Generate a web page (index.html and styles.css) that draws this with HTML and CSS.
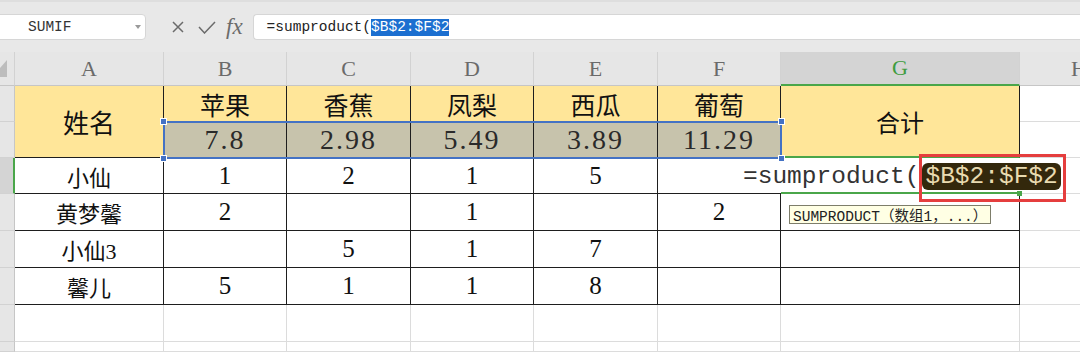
FILE: index.html
```html
<!DOCTYPE html>
<html lang="zh-CN">
<head>
    <meta charset="UTF-8">
    <title>SUMPRODUCT</title>
    <link rel="stylesheet" href="styles.css">
</head>
<body>
    <!-- Name box + formula bar -->
    <div class="toolbar">
        <div class="namebox">
            <span>SUMIF</span>
            <svg class="caret" width="6" height="4" viewBox="0 0 6 4"><path d="M0 0 L6 0 L3 4 Z" fill="#9a9a9a"/></svg>
        </div>
        <svg class="cancel" width="12" height="12" viewBox="0 0 12 12"><path d="M1 1 L11 11 M11 1 L1 11" stroke="#6b6b6b" stroke-width="1.5" fill="none"/></svg>
        <svg class="confirm" width="18" height="13" viewBox="0 0 18 13"><path d="M1 6 L6.5 12 L17 1" stroke="#6b6b6b" stroke-width="1.5" fill="none"/></svg>
        <span class="fx">fx</span>
        <div class="formula">=sumproduct(<span class="sel">$B$2:$F$2</span></div>
    </div>

    <!-- Sheet grid -->
    <div class="sheet">
        <!-- column headers -->
        <div class="ch corner">
            <svg width="8" height="18" viewBox="0 0 8 18"><path d="M0 8 L7 0 L7 17 L0 17 Z" fill="#bdbdbd"/></svg>
        </div>
        <div class="ch">A</div>
        <div class="ch">B</div>
        <div class="ch">C</div>
        <div class="ch">D</div>
        <div class="ch">E</div>
        <div class="ch">F</div>
        <div class="ch active">G</div>
        <div class="ch h">H</div>

        <!-- row 1 -->
        <div class="rh"></div>
        <div class="c t y merged head">姓名</div>
        <div class="c t y fruit">苹果</div>
        <div class="c t y fruit">香蕉</div>
        <div class="c t y fruit">凤梨</div>
        <div class="c t y fruit">西瓜</div>
        <div class="c t y fruit">葡萄</div>
        <div class="c t y merged total">合计</div>
        <div class="c"></div>

        <!-- row 2 -->
        <div class="rh"></div>
        <div class="c t price b2">7.8
            <span class="selbox">
                <i class="handle tl"></i><i class="handle tr"></i>
                <i class="handle bl"></i><i class="handle br"></i>
            </span>
        </div>
        <div class="c t price">2.98</div>
        <div class="c t price">5.49</div>
        <div class="c t price">3.89</div>
        <div class="c t price">11.29</div>
        <div class="c"></div>

        <!-- row 3 (being edited) -->
        <div class="rh active"></div>
        <div class="c t name">小仙</div>
        <div class="c t">1</div>
        <div class="c t">2</div>
        <div class="c t">1</div>
        <div class="c t">5</div>
        <div class="c t nb"></div>
        <div class="c t g3">
            <div class="edit">=sumproduct(<span class="ref">$B$2:$F$2</span></div>
            <div class="tip">SUMPRODUCT（数组1，...）</div>
        </div>
        <div class="c"></div>

        <!-- row 4 -->
        <div class="rh"></div>
        <div class="c t name">黄梦馨</div>
        <div class="c t">2</div>
        <div class="c t"></div>
        <div class="c t">1</div>
        <div class="c t"></div>
        <div class="c t">2</div>
        <div class="c t"></div>
        <div class="c"></div>

        <!-- row 5 -->
        <div class="rh"></div>
        <div class="c t name">小仙3</div>
        <div class="c t"></div>
        <div class="c t">5</div>
        <div class="c t">1</div>
        <div class="c t">7</div>
        <div class="c t"></div>
        <div class="c t"></div>
        <div class="c"></div>

        <!-- row 6 -->
        <div class="rh"></div>
        <div class="c t name">馨儿</div>
        <div class="c t">5</div>
        <div class="c t">1</div>
        <div class="c t">1</div>
        <div class="c t">8</div>
        <div class="c t"></div>
        <div class="c t"></div>
        <div class="c"></div>

        <!-- empty rows -->
        <div class="rh"></div>
        <div class="c"></div><div class="c"></div><div class="c"></div><div class="c"></div>
        <div class="c"></div><div class="c"></div><div class="c"></div><div class="c"></div>

        <div class="rh"></div>
        <div class="c"></div><div class="c"></div><div class="c"></div><div class="c"></div>
        <div class="c"></div><div class="c"></div><div class="c"></div><div class="c"></div>
    </div>
</body>
</html>
```

FILE: styles.css
```css
/* Reset */
*, *::before, *::after {
    margin: 0;
    padding: 0;
    box-sizing: border-box;
}

html, body {
    overflow: hidden;
}

body {
    width: 1080px;
    height: 352px;
    background-color: #e8e8e8;
    font-family: "Liberation Serif", "Noto Sans CJK SC", serif;
}

/* Formula bar */
.toolbar {
    height: 52px;
    display: flex;
    align-items: center;
    padding: 12px 0 12px;
    border-top: 2px solid #dedede;
}
.namebox {
    width: 152px;
    height: 26px;
    margin-left: -6px;
    padding-left: 33px;
    padding-right: 4px;
    display: flex;
    align-items: center;
    justify-content: space-between;
    background-color: #fff;
    border: 1px solid #d6d6d6;
    border-radius: 4px;
    font-family: "Liberation Mono", monospace;
    font-size: 14.5px;
    color: #333;
}
.cancel {
    margin-left: 26px;
}
.confirm {
    margin-left: 14px;
}
.fx {
    margin-left: 10px;
    font-family: "Liberation Serif", serif;
    font-style: italic;
    font-size: 23px;
    line-height: 26px;
    color: #6b6b6b;
}
.formula {
    flex: 1;
    height: 26px;
    margin-left: 10px;
    padding-left: 13px;
    display: flex;
    align-items: center;
    background-color: #fff;
    border: 1px solid #d6d6d6;
    border-right: none;
    border-radius: 4px 0 0 4px;
    font-family: "Liberation Mono", monospace;
    font-size: 14.5px;
    color: #222;
    white-space: nowrap;
}
.formula .sel {
    background-color: #1c6fd0;
    color: #fff;
    line-height: 17px;
}

/* Sheet */
.sheet {
    display: grid;
    grid-template-columns: 15px 149px 123px 124px 123px 124px 123px 239px 1fr;
    grid-template-rows: 34px 36px 36px 36px 37px 37px 37px 37px 10px;
    background-color: #fff;
}

.ch {
    display: flex;
    align-items: center;
    justify-content: center;
    background-color: #e6e6e6;
    border-right: 1px solid #d2d2d2;
    border-bottom: 1px solid #c6c6c6;
    font-size: 22px;
    color: #6a6a6a;
}
.ch.corner {
    justify-content: flex-start;
    align-items: flex-start;
    padding-top: 8px;
}
.ch.active {
    background-color: #d4d4d4;
    color: #3f9c3f;
    border-bottom: 2px solid #4aa64a;
}
.ch.h {
    justify-content: flex-start;
    padding-left: 51px;
}

.rh {
    background-color: #e6e6e6;
    border-right: 1px solid #c6c6c6;
    border-bottom: 1px solid #d2d2d2;
}
.rh.active {
    background-color: #d4d4d4;
    border-right: 2px solid #4aa64a;
}

.c {
    display: flex;
    align-items: center;
    justify-content: center;
    border-right: 1px solid #dcdcdc;
    border-bottom: 1px solid #dcdcdc;
    font-size: 25px;
    color: #111;
}
.c.t {
    border-right-color: #1e1e1e;
    border-bottom-color: #1e1e1e;
}
.c.nb {
    border-right: none;
}
.y {
    background-color: #ffe699;
}
.merged {
    grid-row: span 2;
}
.head {
    font-size: 26px;
}
.fruit {
    font-size: 25px;
}
.total {
    font-size: 24px;
    border-bottom: 2px solid #4aa64a !important;
}
.name {
    font-size: 22px;
}
.price {
    background-color: #c7c3ac;
    font-size: 28px;
    letter-spacing: 2px;
    color: #2a2a2a;
}

/* Selected range B2:F2 */
.b2 {
    position: relative;
}
.selbox {
    position: absolute;
    left: -1px;
    top: -1px;
    width: 619px;
    height: 38px;
    border: 2px solid #4472c4;
    z-index: 2;
}
.handle {
    position: absolute;
    width: 7px;
    height: 7px;
    background-color: #4472c4;
    border: 1px solid #fff;
}
.handle.tl { left: -5px; top: -5px; }
.handle.tr { right: -5px; top: -5px; }
.handle.bl { left: -5px; bottom: -5px; }
.handle.br { right: -5px; bottom: -5px; }

/* Active cell G3 with in-cell editing */
.g3 {
    position: relative;
    border-right: none !important;
    border-bottom: 2px solid #4aa64a !important;
}
.g3::after {
    content: "";
    position: absolute;
    right: -2px;
    bottom: -4px;
    width: 5px;
    height: 5px;
    background-color: #4aa64a;
}
.edit {
    position: absolute;
    left: -38px;
    top: 3px;
    bottom: 0;
    display: flex;
    align-items: center;
    white-space: nowrap;
    font-family: "Liberation Mono", monospace;
    font-size: 24.5px;
    color: #333;
    z-index: 3;
}
.ref {
    position: relative;
    margin-left: 3px;
    padding: 0 3px;
    line-height: 27px;
    background-color: #33280c;
    color: #e9dbb0;
    border-radius: 6px;
}
.ref::after {
    content: "";
    position: absolute;
    left: -3px;
    top: -9px;
    right: -5px;
    bottom: -12px;
    border: 3px solid #e53e3e;
}
.tip {
    position: absolute;
    left: 8px;
    top: 47px;
    height: 19px;
    padding: 0 3px;
    display: flex;
    align-items: center;
    white-space: nowrap;
    background-color: #ffffe4;
    border: 1px solid #7d7d6a;
    font-family: "Liberation Mono", "Noto Sans CJK SC", monospace;
    font-size: 14.5px;
    color: #222;
    z-index: 3;
}
```
